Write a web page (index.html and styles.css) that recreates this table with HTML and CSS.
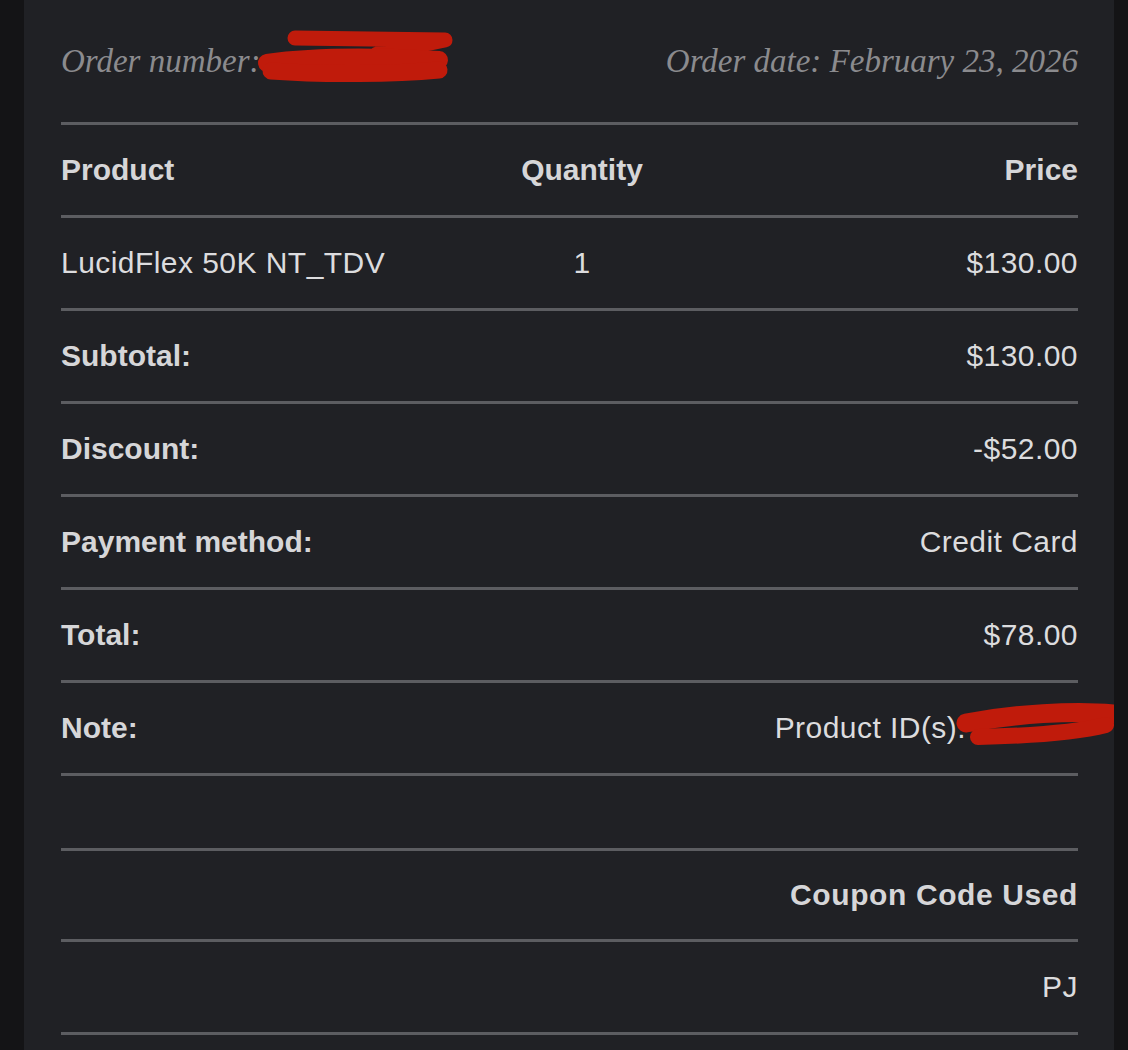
FILE: index.html
```html
<!DOCTYPE html>
<html lang="en">
<head>
<meta charset="utf-8">
<title>Order</title>
<link rel="stylesheet" href="styles.css">
</head>
<body>
<div class="page">
  <div class="panel">
    <div class="order-head">
      <div class="order-num">Order number:<span class="redact-wrap"><span class="hidden-num">000000</span><svg class="scribble scribble-num" width="205" height="58" viewBox="0 0 205 58"><path d="M40 12 L190 14 L122 28" fill="none" stroke="#c01b0b" stroke-width="15" stroke-linecap="round" stroke-linejoin="round"/><path d="M12 37 C60 30 130 31 184 34" fill="none" stroke="#c01b0b" stroke-width="18" stroke-linecap="round"/><path d="M16 45 C70 49 140 48 184 44" fill="none" stroke="#c01b0b" stroke-width="17" stroke-linecap="round"/></svg></span></div>
      <div class="order-date">Order date: February 23, 2026</div>
    </div>
    <div class="row cols3 head">
      <div class="c-prod">Product</div>
      <div class="c-qty">Quantity</div>
      <div class="c-price">Price</div>
    </div>
    <div class="row cols3">
      <div class="c-prod val">LucidFlex 50K NT_TDV</div>
      <div class="c-qty val">1</div>
      <div class="c-price val">$130.00</div>
    </div>
    <div class="row">
      <div class="label">Subtotal:</div>
      <div class="val">$130.00</div>
    </div>
    <div class="row">
      <div class="label">Discount:</div>
      <div class="val">-$52.00</div>
    </div>
    <div class="row">
      <div class="label">Payment method:</div>
      <div class="val">Credit Card</div>
    </div>
    <div class="row">
      <div class="label">Total:</div>
      <div class="val">$78.00</div>
    </div>
    <div class="row">
      <div class="label">Note:</div>
      <div class="val note-val">Product ID(s).<span class="redact-wrap"><span class="hidden-id">0000000</span><svg class="scribble scribble-id" width="172" height="50" viewBox="0 0 172 50"><path d="M12 22 C60 13 120 9 160 13" fill="none" stroke="#c01b0b" stroke-width="19" stroke-linecap="round"/><path d="M24 36 C70 35 120 32 152 24" fill="none" stroke="#c01b0b" stroke-width="16" stroke-linecap="round"/></svg></span></div>
    </div>
    <div class="row empty"></div>
    <div class="row right">
      <div class="label coupon">Coupon Code Used</div>
    </div>
    <div class="row right">
      <div class="val">PJ</div>
    </div>
  </div>
</div>
</body>
</html>
```
FILE: styles.css
```css
html, body {
  margin: 0;
  padding: 0;
  background: #141416;
}
.page {
  padding-left: 24px;
  width: 1090px;
  height: 1050px;
  overflow: hidden;
}
.panel {
  background: #202125;
  height: 1050px;
  padding: 0 36px 0 37px;
  font-family: "Liberation Sans", Arial, sans-serif;
  font-size: 30px;
}
.order-head {
  display: flex;
  justify-content: space-between;
  align-items: center;
  height: 122px;
  border-bottom: 3px solid #5c5d61;
  font-family: "Liberation Serif", "Times New Roman", serif;
  font-style: italic;
  font-size: 33px;
  color: #8b8b8e;
}
.redact-wrap {
  position: relative;
  display: inline-block;
}
.hidden-num {
  color: transparent;
  font-size: 12px;
}
.scribble {
  position: absolute;
}
.scribble-num {
  left: -6px;
  top: -17px;
}
.row {
  display: flex;
  justify-content: space-between;
  align-items: center;
  height: 90px;
  border-bottom: 3px solid #5c5d61;
}
.cols3 {
  display: grid;
  grid-template-columns: 436px 170px 1fr;
}
.c-qty { text-align: center; }
.c-price { text-align: right; }
.head div, .label {
  font-weight: bold;
  color: #d6d6d8;
}
.val {
  color: #dcdcde;
  letter-spacing: 0.45px;
}
.empty { height: 72px; }
.right { justify-content: flex-end; }
.row.right:nth-last-child(2) { height: 88px; }
.coupon { letter-spacing: 0.6px; }
.note-val { white-space: nowrap; }
.hidden-id {
  color: transparent;
  display: inline-block;
  width: 112px;
}
.scribble-id {
  left: -12px;
  top: -10px;
}
```
